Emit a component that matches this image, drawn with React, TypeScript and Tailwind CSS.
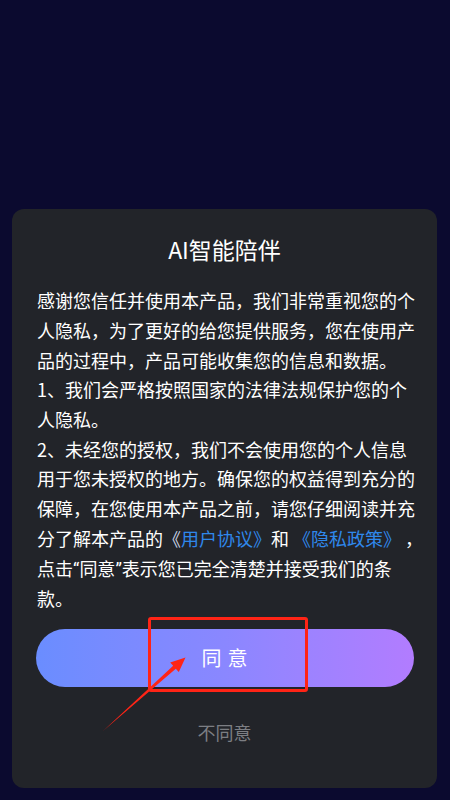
import React from "react";

const lines1 = [
  "感谢您信任并使用本产品，我们非常重视您的个",
  "人隐私，为了更好的给您提供服务，您在使用产",
  "品的过程中，产品可能收集您的信息和数据。",
  "1、我们会严格按照国家的法律法规保护您的个",
  "人隐私。",
  "2、未经您的授权，我们不会使用您的个人信息",
  "用于您未授权的地方。确保您的权益得到充分的",
  "保障，在您使用本产品之前，请您仔细阅读并充",
];

export default function App() {
  return (
    <div
      className="relative w-[450px] h-[800px] bg-[#0b0a2f] flex flex-col justify-end px-[12px] pb-[12px] overflow-hidden"
      style={{ fontFamily: '"Noto Sans CJK SC", "Noto Sans", sans-serif' }}
    >
      <div className="w-[425px] bg-[#222429] rounded-[12px] pt-[25px] pb-[41px] flex flex-col items-center">
        <h1 className="text-[23px] leading-[30px] text-white font-normal">AI智能陪伴</h1>
        <div className="mt-[22px] w-[425px] pl-[25px] text-[18px] leading-[29.7px] text-white font-normal">
          {lines1.map((l, i) => (
            <div key={i} className="whitespace-nowrap">{l}</div>
          ))}
          <div className="whitespace-nowrap">
            分了解本产品的<span className="text-[#c9d3e6]">《</span><span className="text-[#2f88ec]">用户协议》</span>和<span className="text-[#2f88ec]"> 《隐私政策》</span> ，
          </div>
          <div className="whitespace-nowrap">
            点击<span className="font-['Roboto',sans-serif]">“</span>同意<span className="font-['Roboto',sans-serif]">”</span>表示您已完全清楚并接受我们的条
          </div>
          <div className="whitespace-nowrap">款。</div>
        </div>
        <button className="mt-[15px] w-[378px] h-[58px] rounded-full bg-gradient-to-r from-[#6a8dff] via-[#8a87ff] to-[#b27cff] text-white text-[20px] tracking-[6px] pl-[6px]">
          同意
        </button>
        <div className="mt-[30px] text-[18px] leading-[30px] text-[#7c7e83]">不同意</div>
      </div>

      <div className="absolute left-[148px] top-[617px] w-[160px] h-[75px] border-[3px] border-[#ff2416] rounded-[3px] pointer-events-none" />
      <svg className="absolute left-0 top-0 pointer-events-none" width="450" height="800" viewBox="0 0 450 800">
        <polygon
          points="103,731 175.8,668.7 178.8,672 185.5,657.5 170.2,662.4 173.2,665.7"
          fill="#ff2416"
        />
      </svg>
    </div>
  );
}
